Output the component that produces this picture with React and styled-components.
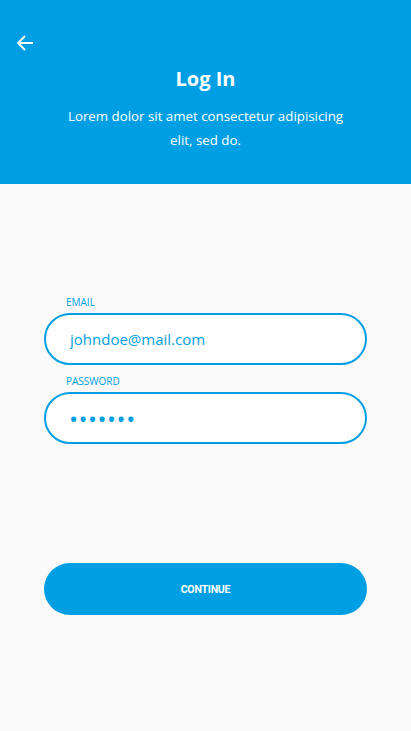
import React from 'react'
import styled, { createGlobalStyle } from 'styled-components'

const Global = createGlobalStyle`
  * { box-sizing: border-box; }
  body {
    margin: 0;
    background: #fafafa;
    font-family: "Open Sans", "Noto Sans", sans-serif;
  }
`

const Page = styled.div`
  width: 411px;
  height: 731px;
  background: #fafafa;
  display: flex;
  flex-direction: column;
`

const Header = styled.header`
  height: 184px;
  background: #009fe3;
  color: #fff;
  display: flex;
  flex-direction: column;
  padding: 34px 16px 0;
`

const BackButton = styled.button`
  width: 18px;
  height: 18px;
  padding: 0;
  border: none;
  background: none;
  color: #fff;
  display: flex;
`

const Title = styled.h1`
  margin: 12px 0 0;
  font-size: 20px;
  font-weight: 700;
  text-align: center;
  line-height: 30px;
`

const Description = styled.p`
  margin: 10px auto 0;
  width: 290px;
  font-size: 13.3px;
  line-height: 24px;
  text-align: center;
`

const Form = styled.form`
  display: flex;
  flex-direction: column;
  padding: 111px 44px 0 44px;
`

const Label = styled.label`
  font-size: 10px;
  color: #009fe3;
  padding-left: 22px;
  line-height: 14px;
  margin-bottom: 4px;
  margin-top: ${p => p.$first ? '0' : '9px'};
`

const Input = styled.input`
  height: 52px;
  border: 2px solid #009fe3;
  border-radius: 26px;
  background: #fff;
  padding: 0 24px;
  font-family: inherit;
  font-size: 15px;
  color: #009fe3;
  outline: none;
  &[type='password'] {
    font-size: 24px;
    letter-spacing: 0.5px;
    padding-left: 23px;
  }
`

const Button = styled.button`
  margin-top: 119px;
  height: 52px;
  border: none;
  border-radius: 26px;
  background: #009fe3;
  color: #fff;
  font-family: Roboto, sans-serif;
  font-size: 10.5px;
  font-weight: 700;
  letter-spacing: -0.2px;
`

const App = () => {
  return (
    <Page>
      <Global />
      <Header>
        <BackButton aria-label="back">
          <svg width="18" height="18" viewBox="0 0 18 18" fill="none" stroke="currentColor" strokeWidth="1.8">
            <path d="M17 9H2M9 2L2 9l7 7" />
          </svg>
        </BackButton>
        <Title>Log In</Title>
        <Description>Lorem dolor sit amet consectetur adipisicing elit, sed do.</Description>
      </Header>
      <Form onSubmit={e => e.preventDefault()}>
        <Label $first>EMAIL</Label>
        <Input type="email" defaultValue="johndoe@mail.com" />
        <Label>PASSWORD</Label>
        <Input type="password" defaultValue="1234567" />
        <Button type="submit">CONTINUE</Button>
      </Form>
    </Page>
  )
}

export default App
